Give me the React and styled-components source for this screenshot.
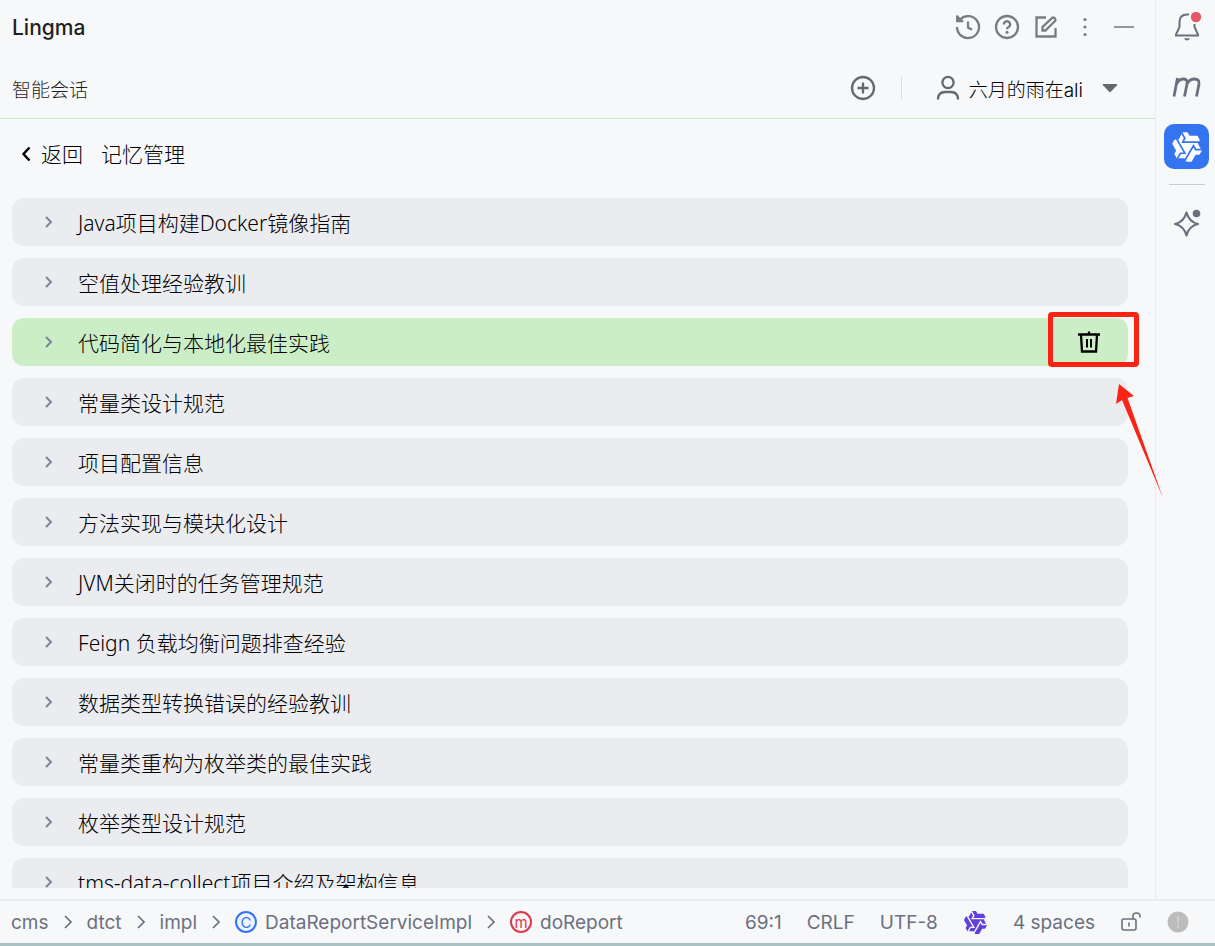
import React from "react";
import styled, { createGlobalStyle, css } from "styled-components";

const memories = [
  "Java项目构建Docker镜像指南",
  "空值处理经验教训",
  "代码简化与本地化最佳实践",
  "常量类设计规范",
  "项目配置信息",
  "方法实现与模块化设计",
  "JVM关闭时的任务管理规范",
  "Feign 负载均衡问题排查经验",
  "数据类型转换错误的经验教训",
  "常量类重构为枚举类的最佳实践",
  "枚举类型设计规范",
  "tms-data-collect项目介绍及架构信息",
];

const selected = 2;

const Icon = ({ size = 28, children, ...rest }) => (
  <svg
    width={size}
    height={size}
    viewBox={`0 0 ${size} ${size}`}
    fill="none"
    stroke="currentColor"
    strokeWidth="2.3"
    aria-hidden="true"
    {...rest}
  >
    {children}
  </svg>
);

const Chevron = ({ small }) => (
  <svg width="10" height="14" viewBox="0 0 10 14" fill="none" stroke="currentColor" strokeWidth={small ? 2 : 1.7} aria-hidden="true">
    <path d={small ? "M2 2 7 7 2 12" : "M2 1 8 7 2 13"} />
  </svg>
);

const LingmaLogo = ({ size, fill, line }) => (
  <svg width={size} height={size} viewBox="0 0 24 24" aria-hidden="true">
    <path
      fill={fill}
      d="M12.6 1.3 13.9 3.5H19.5Q19.8 3.5 20 3.8L21.4 6.4Q21.7 6.9 21.4 7.3L20.3 9.2Q20.1 9.5 20.3 9.8L22.9 14.4Q23.1 14.8 22.9 15.2L21.5 17.5Q21.3 17.9 20.8 17.9H18.4L15.7 22.7Q15.4 23 15 23H12Q11.6 23 11.4 22.7L10.1 20.4H5Q4.4 20.4 4.2 20.3L2.6 17.5Q2.4 17.2 2.6 17L3.8 14.9V14.7L1.1 10Q.9 9.6 1.1 9.2L2.5 6.7Q2.7 6.3 3.1 6.3H5.7L8.6 1.4Q8.8 1 9.2 1H11.9Q12.4 1 12.6 1.3Z"
    />
    <g fill="none" stroke={line} strokeWidth="1.3">
      <path d="M8.2 1.6 10.400 5.400 8.800 8.300H21" />
      <path d="M8.2 1.6 10.400 5.400 8.800 8.300H21" transform="rotate(120 12 12)" />
      <path d="M8.2 1.6 10.400 5.400 8.800 8.300H21" transform="rotate(240 12 12)" />
    </g>
  </svg>
);

const App = () => {
  return (
    <>
      <GlobalStyle />
      <Window>
        <Workspace>
          <Panel>
            <TitleBar>
              <Title>Lingma</Title>
              <Tools>
                <IconButton aria-label="History">
                  <Icon>
                    <path d="M6.3 6.2A11 11 0 1 1 3 14" />
                    <path d="M3.2 2V8.5H10Z" fill="currentColor" stroke="none" />
                    <path d="M3.2 2.5V8H9" />
                    <path d="M14 8.5V14.5L18 16.8" />
                  </Icon>
                </IconButton>
                <IconButton aria-label="Help">
                  <Icon>
                    <circle cx="14" cy="14" r="11" />
                    <path d="M10.9 11.5A3.1 3.1 0 1 1 15.6 14Q14 14.9 14 16.3" />
                    <circle cx="14" cy="19.3" r="1.5" fill="currentColor" stroke="none" />
                  </Icon>
                </IconButton>
                <IconButton aria-label="Edit">
                  <Icon>
                    <path d="M14 4.5H4.5V23.5H23.5V15" />
                    <path d="M10.5 17.5V14L20.2 4.8Q21.3 4 22.6 5.2L23.2 5.8Q24 7 23 8L13.4 17.5Z" />
                  </Icon>
                </IconButton>
                <IconButton aria-label="More">
                  <Icon fill="currentColor" stroke="none">
                    <circle cx="14" cy="6.5" r="1.6" />
                    <circle cx="14" cy="14" r="1.6" />
                    <circle cx="14" cy="21.5" r="1.6" />
                  </Icon>
                </IconButton>
                <IconButton aria-label="Minimize">
                  <Icon strokeWidth="1.6">
                    <path d="M4 14H24" />
                  </Icon>
                </IconButton>
              </Tools>
            </TitleBar>
            <SessionBar>
              <SessionName>智能会话</SessionName>
              <Account>
                <IconButton $dark aria-label="New session">
                  <Icon>
                    <circle cx="14" cy="14" r="11" />
                    <path d="M14 8.5V19.5M8.5 14H19.5" />
                  </Icon>
                </IconButton>
                <Divider />
                <UserButton>
                  <Icon>
                    <circle cx="14" cy="8.5" r="5.6" />
                    <path d="M4 25.5Q4 18 11 18H17Q24 18 24 25.5" />
                  </Icon>
                  <span>六月的雨在ali</span>
                  <svg width="16" height="10" viewBox="0 0 16 10" fill="currentColor" aria-hidden="true">
                    <path d="M1.5 1H14.5Q15.8 1 15 2.2L9 8.6Q8 9.6 7 8.6L1 2.2Q.2 1 1.5 1Z" />
                  </svg>
                </UserButton>
              </Account>
            </SessionBar>
            <PageHeader>
              <BackButton>
                <svg width="12" height="16" viewBox="0 0 12 16" fill="none" stroke="currentColor" strokeWidth="2.4" aria-hidden="true">
                  <path d="M9.5 2.5 3.5 9 9.5 15.5" />
                </svg>
                返回
              </BackButton>
              <PageTitle>记忆管理</PageTitle>
            </PageHeader>
            <MemoryList>
              {memories.map((name, i) => (
                <MemoryItem key={name} $active={i === selected}>
                  <MemoryToggle>
                    <Chevron small />
                    <span>{name}</span>
                  </MemoryToggle>
                  {i === selected && (
                    <>
                      <DeleteButton aria-label="Delete">
                        <Icon size={24}>
                          <path d="M1 4.5H23M12 1.5V5M4 5 5 21.5H19L20 5" />
                          <path d="M10 9V17.5M14 9V17.5" strokeWidth="2" />
                        </Icon>
                      </DeleteButton>
                      <Highlight />
                      <Arrow width="47" height="114" viewBox="0 0 47 114" aria-hidden="true">
                        <path d="M3 0 18 12 11.5 14 47 114 6 16 0 20Z" fill="#fb2414" />
                      </Arrow>
                    </>
                  )}
                </MemoryItem>
              ))}
            </MemoryList>
          </Panel>
          <SideBar>
            <SideButton aria-label="Notifications">
              <Icon size={32} strokeWidth="2">
                <path d="M18 3.5H16Q8.5 3.5 8.5 11V16L5 23.5V24.5H27V23.5L23.5 16V13" />
                <path d="M13 27.2H19Q18 29.5 16 29.5T13 27.2Z" fill="currentColor" stroke="none" />
                <circle cx="25" cy="6" r="5.2" fill="#e55765" stroke="none" />
              </Icon>
            </SideButton>
            <SideButton aria-label="Maven">
              <Icon size={32} strokeWidth="2.8">
                <path d="M6.5 7 3 25.500M5.7 13Q8 8 12.500 8T16 13L13.500 25.500M15.800 13Q18.500 8 23.500 8T28 13L25.500 25.500" />
              </Icon>
            </SideButton>
            <SideButton $active aria-label="Lingma">
              <LingmaLogo size={32} fill="#fff" line="#3574f0" />
            </SideButton>
            <SideDivider />
            <SideButton aria-label="AI">
              <Icon size={32} strokeWidth="2.2">
                <path d="M15.5 5.500Q18 15 27 17Q18 19 15.500 28.500Q13 19 4 17Q13 15 15.500 5.500Z" strokeLinejoin="round" />
                <circle cx="25.5" cy="6.500" r="3.800" fill="currentColor" stroke="none" />
              </Icon>
            </SideButton>
          </SideBar>
        </Workspace>
        <StatusBar>
          <Crumbs>
            <Crumb href="#">cms</Crumb>
            <Chevron />
            <Crumb href="#">dtct</Crumb>
            <Chevron />
            <Crumb href="#">impl</Crumb>
            <Chevron />
            <Crumb href="#">
              <Badge $color="#3574f0" $fill="#edf3ff">C</Badge>
              DataReportServiceImpl
            </Crumb>
            <Chevron />
            <Crumb href="#">
              <Badge $color="#db3b4b" $fill="#fff7f7">m</Badge>
              doReport
            </Crumb>
          </Crumbs>
          <StatusGroup>
            <StatusItem>69:1</StatusItem>
            <StatusItem>CRLF</StatusItem>
            <StatusItem>UTF-8</StatusItem>
            <StatusItem aria-label="Lingma">
              <LingmaLogo size={25} fill="#6141dc" line="#f7f8fa" />
            </StatusItem>
            <StatusItem>4 spaces</StatusItem>
            <StatusItem aria-label="Writable">
              <Icon size={22} strokeWidth="1.6">
                <rect x="2" y="8" width="14" height="11" rx="2" />
                <path d="M13 8V5Q13 2 16.5 2T20 5V6.5M9 11.5V15.5" />
              </Icon>
            </StatusItem>
            <StatusItem aria-label="Problems">
              <Icon size={22} strokeWidth="2" stroke="#d0d0d0">
                <circle cx="11" cy="11" r="10.5" fill="#bcbcbc" stroke="none" />
                <path d="M11 5V12.5M11 14.5V17" />
              </Icon>
            </StatusItem>
          </StatusGroup>
        </StatusBar>
      </Window>
    </>
  );
};

const GlobalStyle = createGlobalStyle`
  * {
    box-sizing: border-box;
  }

  body {
    margin: 0;
    background: #f7f8fa;
    font-family: "Inter", "Noto Sans CJK SC", sans-serif;
  }

  button {
    display: flex;
    align-items: center;
    padding: 0;
    border: 0;
    background: none;
    color: inherit;
    font: inherit;
    cursor: pointer;
  }

  svg {
    flex: none;
  }
`;

const Window = styled.div`
  display: flex;
  flex-direction: column;
  height: 100vh;
  background: #f7f8fa;
`;

const Workspace = styled.div`
  display: flex;
  flex: 1;
  min-height: 0;
`;

const Panel = styled.main`
  display: flex;
  flex-direction: column;
  flex: 1;
  min-width: 0;
  padding-bottom: 11px;
`;

const TitleBar = styled.header`
  display: flex;
  align-items: center;
  justify-content: space-between;
  height: 54px;
  padding: 0 17px 0 12px;
`;

const Title = styled.h1`
  margin: 0;
  color: #1e1f22;
  font-size: 21px;
  font-weight: 500;
`;

const Tools = styled.div`
  display: flex;
  gap: 11px;
`;

const IconButton = styled.button`
  && {
    color: ${({ $dark }) => ($dark ? "#66686d" : "#7a7b7f")};
  }
`;

const SessionBar = styled.div`
  display: flex;
  align-items: center;
  justify-content: space-between;
  height: 65px;
  padding: 4px 37px 0 12px;
  border-bottom: 1px solid #c9eac7;
`;

const SessionName = styled.span`
  color: #1e1f22;
  font-size: 19px;
  font-weight: 300;
`;

const Account = styled.div`
  display: flex;
  align-items: center;
`;

const Divider = styled.span`
  width: 1px;
  height: 24px;
  margin: 0 32px 0 24px;
  background: #c9eac7;
`;

const UserButton = styled.button`
  && {
    color: #66686d;
    font-size: 19px;
  }

  span {
    margin: 0 19px 0 7px;
    color: #000;
    font-weight: 300;
  }
`;

const PageHeader = styled.div`
  display: flex;
  align-items: center;
  gap: 18px;
  height: 79px;
  padding: 0 20px 12px;
  color: #000;
  font-size: 21px;
  font-weight: 300;
`;

const BackButton = styled.button`
  gap: 9px;
`;

const PageTitle = styled.h2`
  margin: 0;
  font-size: 21px;
  font-weight: 300;
`;

const MemoryList = styled.ul`
  display: flex;
  flex-direction: column;
  flex: 1;
  gap: 12px;
  min-height: 0;
  margin: 0;
  padding: 0 27px 0 12px;
  list-style: none;
  overflow-y: clip;
`;

const MemoryItem = styled.li`
  position: relative;
  display: flex;
  flex: none;
  height: 48px;
  border-radius: 12px;
  background: ${({ $active }) => ($active ? "#cbeec7" : "#ebecf0")};
`;

const MemoryToggle = styled.button`
  && {
    flex: 1;
    gap: 24px;
    padding-left: 32px;
    color: #818594;
    font: 300 21px "Noto Sans", "Noto Sans CJK SC", sans-serif;
  }

  span {
    color: #000;
  }
`;

const DeleteButton = styled.button`
  && {
    padding: 0 27px;
    color: #000;
  }
`;

const Highlight = styled.div`
  position: absolute;
  top: -6px;
  right: -11px;
  width: 91px;
  height: 55px;
  border: 5px solid #fb2414;
  border-radius: 4px;
  z-index: 1;
  pointer-events: none;
`;

const Arrow = styled.svg`
  position: absolute;
  top: 66px;
  right: -35px;
  z-index: 1;
  pointer-events: none;
`;

const SideBar = styled.nav`
  display: flex;
  flex-direction: column;
  align-items: center;
  gap: 15px;
  width: 60px;
  padding-top: 4px;
  padding-left: 2px;
  border-left: 1px solid #ebecf0;
`;

const SideButton = styled.button`
  && {
    justify-content: center;
    width: 45px;
    height: 45px;
    border-radius: 10px;
    color: #6c707e;
    ${({ $active }) =>
      $active &&
      css`
        background: #3574f0;
      `}
  }
`;

const SideDivider = styled.span`
  width: 36px;
  height: 1px;
  background: #c9ccd6;
`;

const StatusBar = styled.footer`
  display: flex;
  align-items: center;
  justify-content: space-between;
  height: 47px;
  padding: 0 26px 0 11px;
  border-top: 2px solid #ebecf0;
  border-bottom: 3px solid #a9c1c3;
  color: #6c707e;
  font-size: 19px;
`;

const Crumbs = styled.nav`
  display: flex;
  align-items: center;
  gap: 14px;
`;

const Crumb = styled.a`
  display: flex;
  align-items: center;
  gap: 8px;
  color: inherit;
  text-decoration: none;
`;

const Badge = styled.span`
  display: flex;
  align-items: center;
  justify-content: center;
  width: 22px;
  height: 22px;
  border: 2px solid ${({ $color }) => $color};
  border-radius: 50%;
  background: ${({ $fill }) => $fill};
  color: ${({ $color }) => $color};
  font-size: 15px;
  line-height: 15px;
`;

const StatusGroup = styled.div`
  display: flex;
  align-items: center;
  gap: 25px;
`;

const StatusItem = styled.button`
  white-space: nowrap;
`;

export default App;
